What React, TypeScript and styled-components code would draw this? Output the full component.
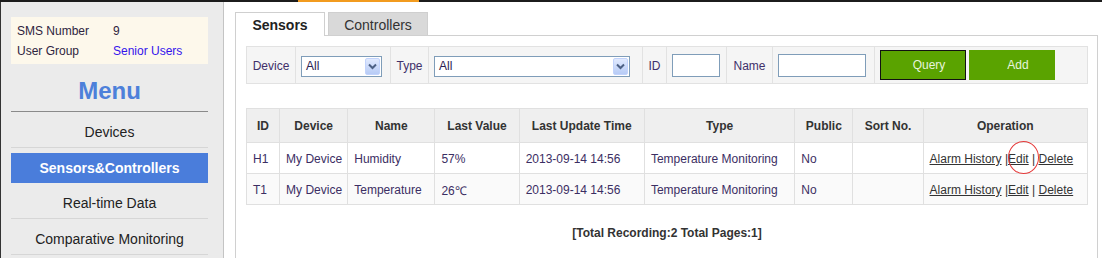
import React from 'react';
import styled, { createGlobalStyle } from 'styled-components';

const GlobalStyle = createGlobalStyle`
  html, body {
    margin: 0;
    padding: 0;
    background: #fff;
  }
  body {
    font-family: "Liberation Sans", Arial, sans-serif;
    font-size: 12px;
    color: #333;
  }
`;

const Page = styled.div`
  width: 1102px;
  height: 258px;
  display: flex;
  flex-direction: column;
  overflow: hidden;
`;

const TopBar = styled.div`
  height: 2px;
  flex: none;
  background: #1c1c1c;
  display: flex;

  & > span {
    margin-left: 298px;
    width: 121px;
    background: #f29b1f;
  }
`;

const Body = styled.div`
  flex: 1;
  display: flex;
  border-left: 1px solid #333;
  min-height: 0;
`;

const Sidebar = styled.div`
  width: 223px;
  flex: none;
  box-sizing: border-box;
  background: #ebebeb;
  border-right: 1px solid #c4c4c4;
  padding: 15px 15px 0 10px;
`;

const InfoBox = styled.div`
  background: #fdf8eb;
  padding: 4px 6px 3px;
  display: grid;
  grid-template-columns: 96px 1fr;
  line-height: 20px;
  font-size: 12px;
  color: #2e2440;
`;

const InfoValue = styled.span<{ $link?: boolean }>`
  color: ${(p) => (p.$link ? '#3414ec' : '#2e2440')};
`;

const MenuTitle = styled.div`
  padding-top: 6px;
  line-height: 41px;
  text-align: center;
  font-size: 24px;
  font-weight: bold;
  color: #4d80da;
  border-bottom: 1px solid #8a8a8a;
`;

const MenuItem = styled.div<{ $active?: boolean }>`
  text-align: center;
  font-size: 14px;
  ${(p) =>
    p.$active
      ? `
    margin-top: 5px;
    height: 30px;
    line-height: 30px;
    background: #4a7ddb;
    color: #fff;
    font-weight: bold;
  `
      : `
    height: 31px;
    padding-top: 4px;
    line-height: 32px;
    color: #222;
    border-bottom: 1px solid #d6d6d6;
  `}
`;

const Main = styled.div`
  flex: 1;
  display: flex;
  flex-direction: column;
  padding: 10px 4px 0 11px;
  min-width: 0;
`;

const TabRow = styled.div`
  display: flex;
  align-items: flex-end;
  gap: 3px;
  height: 23px;
`;

const Tab = styled.div<{ $active?: boolean; $w: number }>`
  width: ${(p) => p.$w}px;
  box-sizing: border-box;
  border: 1px solid #cfcfcf;
  border-bottom: none;
  text-align: center;
  font-size: 14px;
  padding-top: 2px;
  line-height: 21px;
  height: ${(p) => (p.$active ? 24 : 23)}px;
  margin-bottom: ${(p) => (p.$active ? -1 : 0)}px;
  background: ${(p) => (p.$active ? '#fff' : '#d9d9d9')};
  color: ${(p) => (p.$active ? '#222' : '#333')};
  font-weight: ${(p) => (p.$active ? 'bold' : 'normal')};
  position: relative;
`;

const Panel = styled.div`
  flex: 1;
  border: 1px solid #d0d0d0;
  border-bottom: none;
  padding: 10px 9px 0 10px;
`;

const FilterBar = styled.div`
  display: grid;
  grid-template-columns: 49px 95px 38px 214px 24px 60px 46px 102px 1fr;
  height: 36px;
  border: 1px solid #e2e2e2;
  background: #f5f5f5;
`;

const Cell = styled.div<{ $label?: boolean; $last?: boolean }>`
  display: flex;
  align-items: center;
  justify-content: ${(p) => (p.$label ? 'center' : 'flex-start')};
  padding-left: ${(p) => (p.$label ? 0 : 5)}px;
  padding-top: ${(p) => (p.$label ? 2 : 0)}px;
  border-right: ${(p) => (p.$last ? 'none' : '1px solid #e2e2e2')};
  color: #40306a;
  font-size: 12px;
  gap: 3px;
`;

const FakeSelect = styled.div<{ $w: number }>`
  width: ${(p) => p.$w}px;
  height: 21px;
  box-sizing: border-box;
  border: 1px solid #7f9db9;
  background: #fff;
  display: flex;
  align-items: center;
  justify-content: space-between;
  padding: 0 1px 0 4px;
  margin-top: 2px;
  color: #2a2050;
  font-size: 12px;
`;

const SelectArrow = styled.span`
  width: 15px;
  height: 17px;
  box-sizing: border-box;
  border: 1px solid #c2d3fc;
  border-radius: 2px;
  background: linear-gradient(#e1eafe, #b7cbf6);
  display: flex;
  align-items: center;
  justify-content: center;
`;

const TextInput = styled.div<{ $w: number }>`
  width: ${(p) => p.$w}px;
  height: 23px;
  box-sizing: border-box;
  border: 1px solid #7f9db9;
  background: #fff;
  margin-top: 1px;
`;

const Button = styled.div<{ $focused?: boolean }>`
  width: 86px;
  height: 30px;
  box-sizing: border-box;
  background: #5aa300;
  border: 1px solid ${(p) => (p.$focused ? '#111' : '#5aa300')};
  color: #e8f4dc;
  font-size: 12px;
  display: flex;
  align-items: center;
  justify-content: center;
  padding-left: 12px;
`;

const Table = styled.table`
  margin-top: 24px;
  width: 100%;
  border-collapse: collapse;
  table-layout: fixed;
  font-size: 12px;

  th,
  td {
    border: 1px solid #e0e0e0;
    white-space: nowrap;
    overflow: visible;
  }

  th {
    height: 33px;
    background: #efefef;
    color: #333;
    font-weight: bold;
    text-align: center;
    padding: 0;
  }

  td {
    height: 28px;
    padding: 2px 6px 0;
    color: #3b2e63;
    text-align: left;
  }
`;

const Row = styled.tr<{ $alt?: boolean }>`
  background: ${(p) => (p.$alt ? '#fafafa' : '#fff')};
`;

const OpLink = styled.a`
  color: #333;
  text-decoration: underline;
  position: relative;
`;

const Sep = styled.span`
  color: #333;
`;

const Annotation = styled.span`
  position: absolute;
  left: 0;
  top: -11px;
  width: 29px;
  height: 31px;
  border: 1.5px solid #e53a3a;
  border-radius: 50%;
  pointer-events: none;
`;

const Footer = styled.div`
  margin-top: 18px;
  text-align: center;
  font-size: 12px;
  font-weight: bold;
  line-height: 20px;
  color: #333;
`;

const Chevron = () => (
  <svg width="9" height="7" viewBox="0 0 9 7">
    <path d="M1 1.5 L4.5 5 L8 1.5" fill="none" stroke="#4d6185" strokeWidth="2" />
  </svg>
);

const cols = [33, 68, 87, 84, 125, 150, 58, 70, 164];

const rows = [
  { id: 'H1', device: 'My Device', name: 'Humidity', value: '57%', time: '2013-09-14 14:56', type: 'Temperature Monitoring', pub: 'No' },
  { id: 'T1', device: 'My Device', name: 'Temperature', value: '26℃', time: '2013-09-14 14:56', type: 'Temperature Monitoring', pub: 'No' },
];

const App: React.FC = () => {
  return (
    <Page>
      <GlobalStyle />
      <TopBar>
        <span />
      </TopBar>
      <Body>
        <Sidebar>
          <InfoBox>
            <span>SMS Number</span>
            <InfoValue>9</InfoValue>
            <span>User Group</span>
            <InfoValue $link>Senior Users</InfoValue>
          </InfoBox>
          <MenuTitle>Menu</MenuTitle>
          <MenuItem>Devices</MenuItem>
          <MenuItem $active>Sensors&amp;Controllers</MenuItem>
          <MenuItem>Real-time Data</MenuItem>
          <MenuItem>Comparative Monitoring</MenuItem>
        </Sidebar>
        <Main>
          <TabRow>
            <Tab $active $w={90}>Sensors</Tab>
            <Tab $w={100}>Controllers</Tab>
          </TabRow>
          <Panel>
            <FilterBar>
              <Cell $label>Device</Cell>
              <Cell>
                <FakeSelect $w={81}>
                  All
                  <SelectArrow>
                    <Chevron />
                  </SelectArrow>
                </FakeSelect>
              </Cell>
              <Cell $label>Type</Cell>
              <Cell>
                <FakeSelect $w={196}>
                  All
                  <SelectArrow>
                    <Chevron />
                  </SelectArrow>
                </FakeSelect>
              </Cell>
              <Cell $label>ID</Cell>
              <Cell>
                <TextInput $w={48} />
              </Cell>
              <Cell $label>Name</Cell>
              <Cell>
                <TextInput $w={88} />
              </Cell>
              <Cell $last>
                <Button $focused>Query</Button>
                <Button>Add</Button>
              </Cell>
            </FilterBar>
            <Table>
              <colgroup>
                {cols.map((w, i) => (
                  <col key={i} style={{ width: w }} />
                ))}
              </colgroup>
              <thead>
                <tr>
                  <th>ID</th>
                  <th>Device</th>
                  <th>Name</th>
                  <th>Last Value</th>
                  <th>Last Update Time</th>
                  <th>Type</th>
                  <th>Public</th>
                  <th>Sort No.</th>
                  <th>Operation</th>
                </tr>
              </thead>
              <tbody>
                {rows.map((r, i) => (
                  <Row key={r.id} $alt={i % 2 === 1}>
                    <td>{r.id}</td>
                    <td>{r.device}</td>
                    <td>{r.name}</td>
                    <td>{r.value}</td>
                    <td>{r.time}</td>
                    <td>{r.type}</td>
                    <td>{r.pub}</td>
                    <td></td>
                    <td>
                      <OpLink>Alarm History</OpLink>
                      <Sep> |</Sep>
                      <OpLink>
                        Edit
                        {i === 0 && <Annotation />}
                      </OpLink>
                      <Sep>{' | '}</Sep>
                      <OpLink>Delete</OpLink>
                    </td>
                  </Row>
                ))}
              </tbody>
            </Table>
            <Footer>[Total Recording:2 Total Pages:1]</Footer>
          </Panel>
        </Main>
      </Body>
    </Page>
  );
};

export default App;
